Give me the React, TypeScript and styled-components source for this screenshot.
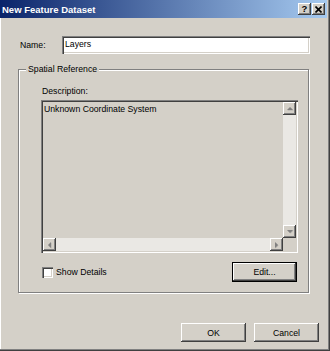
import React from 'react'
import styled, { createGlobalStyle } from 'styled-components'

const GlobalStyle = createGlobalStyle`
  html, body {
    margin: 0;
    padding: 0;
    background: #d4d0c8;
  }
  body {
    font-family: 'Liberation Sans', Arial, sans-serif;
    font-size: 8.7px;
    color: #000;
  }
`

const raised = `
  box-shadow: inset -1px -1px #404040, inset 1px 1px #fff, inset -2px -2px #808080, inset 2px 2px #d4d0c8;
`

const sunken = `
  box-shadow: inset 1px 1px #808080, inset 2px 2px #404040, inset -1px -1px #fff, inset -2px -2px #d4d0c8;
`

const Dialog = styled.div`
  width: 330px;
  height: 351px;
  box-sizing: border-box;
  padding: 0 3px 3px 0;
  background: #d4d0c8;
  display: flex;
  flex-direction: column;
  box-shadow: inset -1px -1px #404040, inset -2px -2px #808080, inset 1px 0 #fff;
`

const TitleBar = styled.div`
  height: 18px;
  flex: none;
  display: flex;
  align-items: center;
  padding: 0 2px;
  background: linear-gradient(to right, #0a246a, #a6caf0);
  color: #fff;
  font-weight: bold;
  font-size: 9.5px;
`

const Title = styled.div`
  flex: 1;
`

const CaptionButtons = styled.div`
  display: flex;
  gap: 1px;
`

const CaptionButton = styled.div`
  width: 13px;
  height: 12px;
  background: #d4d0c8;
  ${raised}
  display: flex;
  align-items: center;
  justify-content: center;
  color: #000;
  font-size: 9.5px;
  line-height: 12px;
`

const Body = styled.div`
  padding: 18px 17px 0 18px;
  display: flex;
  flex-direction: column;
`

const NameRow = styled.div`
  display: flex;
  align-items: center;
  height: 18px;
`

const Label = styled.label`
  width: 42px;
  margin-left: 2px;
`

const Input = styled.input`
  flex: 1;
  height: 18px;
  box-sizing: border-box;
  border: none;
  outline: none;
  margin: 0;
  padding: 0 3px 2px;
  background: #fff;
  font: inherit;
  ${sunken}
`

const Group = styled.fieldset`
  margin: 10px 1px 0 0;
  padding: 0;
  min-width: 0;
  border: 1px solid #808080;
  box-shadow: inset 1px 1px #fff, 1px 1px #fff;
`

const Legend = styled.legend`
  margin-left: 7px;
  padding: 0 2px;
  line-height: 11px;
  background: #d4d0c8;
`

const GroupContent = styled.div`
  padding: 11px 10px 10px 22px;
  display: flex;
  flex-direction: column;
`

const FieldLabel = styled.div`
  line-height: 11px;
  padding-left: 1px;
  margin-bottom: 3px;
`

const TextBox = styled.div`
  height: 153px;
  box-sizing: border-box;
  padding: 2px;
  display: grid;
  grid-template-columns: 1fr 13px;
  grid-template-rows: 1fr 13px;
  background: #d4d0c8;
  ${sunken}
`

const TextContent = styled.div`
  padding: 2px 1px;
  line-height: 11px;
`

const ScrollBar = styled.div<{ $vertical?: boolean }>`
  display: flex;
  flex-direction: ${({ $vertical }) => ($vertical ? 'column' : 'row')};
  background: #eae8e4;
`

const Track = styled.div`
  flex: 1;
`

const ScrollButton = styled.div`
  width: 13px;
  height: 13px;
  flex: none;
  background: #d4d0c8;
  ${raised}
  display: flex;
  align-items: center;
  justify-content: center;
`

const Corner = styled.div`
  background: #d4d0c8;
`

const CheckRow = styled.div`
  margin-top: 9px;
  height: 20px;
  display: flex;
  align-items: center;
  justify-content: space-between;
`

const CheckLabel = styled.label`
  display: flex;
  align-items: center;
  gap: 3px;
  padding-left: 1px;
`

const CheckBox = styled.span`
  width: 11px;
  height: 11px;
  background: #fff;
  ${sunken}
`

const Button = styled.div<{ $default?: boolean }>`
  width: 65px;
  height: ${({ $default }) => ($default ? '20px' : '19px')};
  box-sizing: border-box;
  display: flex;
  align-items: center;
  justify-content: center;
  background: #d4d0c8;
  ${raised}
  ${({ $default }) => ($default ? 'border: 1px solid #000; margin-right: 1px;' : '')}
`

const Footer = styled.div`
  margin-top: auto;
  display: flex;
  justify-content: flex-end;
  gap: 8px;
  padding: 0 8px 6px 0;
`

type Dir = 'up' | 'down' | 'left' | 'right'

const arrowPoints: Record<Dir, string> = {
  up: '1,4 4,1 7,4',
  down: '1,1 4,4 7,1',
  left: '4,1 1,4 4,7',
  right: '1,1 4,4 1,7',
}

const Arrow = ({ dir }: { dir: Dir }) => {
  const flat = dir === 'up' || dir === 'down'
  return (
    <svg width={flat ? 8 : 5} height={flat ? 5 : 8} viewBox={flat ? '0 0 8 5' : '0 0 5 8'}>
      <polygon points={arrowPoints[dir]} fill="#808080" transform="translate(0.5,0.5)" opacity="0.4" />
      <polygon points={arrowPoints[dir]} fill="#808080" />
    </svg>
  )
}

const CloseIcon = () => (
  <svg width="7" height="7" viewBox="0 0 7 7">
    <path d="M0.5 0.5 L6.5 6.5 M6.5 0.5 L0.5 6.5" stroke="#000" strokeWidth="1.6" />
  </svg>
)

const App = () => (
  <>
    <GlobalStyle />
    <Dialog>
      <TitleBar>
        <Title>New Feature Dataset</Title>
        <CaptionButtons>
          <CaptionButton>?</CaptionButton>
          <CaptionButton>
            <CloseIcon />
          </CaptionButton>
        </CaptionButtons>
      </TitleBar>
      <Body>
        <NameRow>
          <Label>Name:</Label>
          <Input defaultValue="Layers" />
        </NameRow>
        <Group>
          <Legend>Spatial Reference</Legend>
          <GroupContent>
            <FieldLabel>Description:</FieldLabel>
            <TextBox>
              <TextContent>Unknown Coordinate System</TextContent>
              <ScrollBar $vertical>
                <ScrollButton>
                  <Arrow dir="up" />
                </ScrollButton>
                <Track />
                <ScrollButton>
                  <Arrow dir="down" />
                </ScrollButton>
              </ScrollBar>
              <ScrollBar>
                <ScrollButton>
                  <Arrow dir="left" />
                </ScrollButton>
                <Track />
                <ScrollButton>
                  <Arrow dir="right" />
                </ScrollButton>
              </ScrollBar>
              <Corner />
            </TextBox>
            <CheckRow>
              <CheckLabel>
                <CheckBox />
                Show Details
              </CheckLabel>
              <Button $default>Edit...</Button>
            </CheckRow>
          </GroupContent>
        </Group>
      </Body>
      <Footer>
        <Button>OK</Button>
        <Button>Cancel</Button>
      </Footer>
    </Dialog>
  </>
)

export default App
